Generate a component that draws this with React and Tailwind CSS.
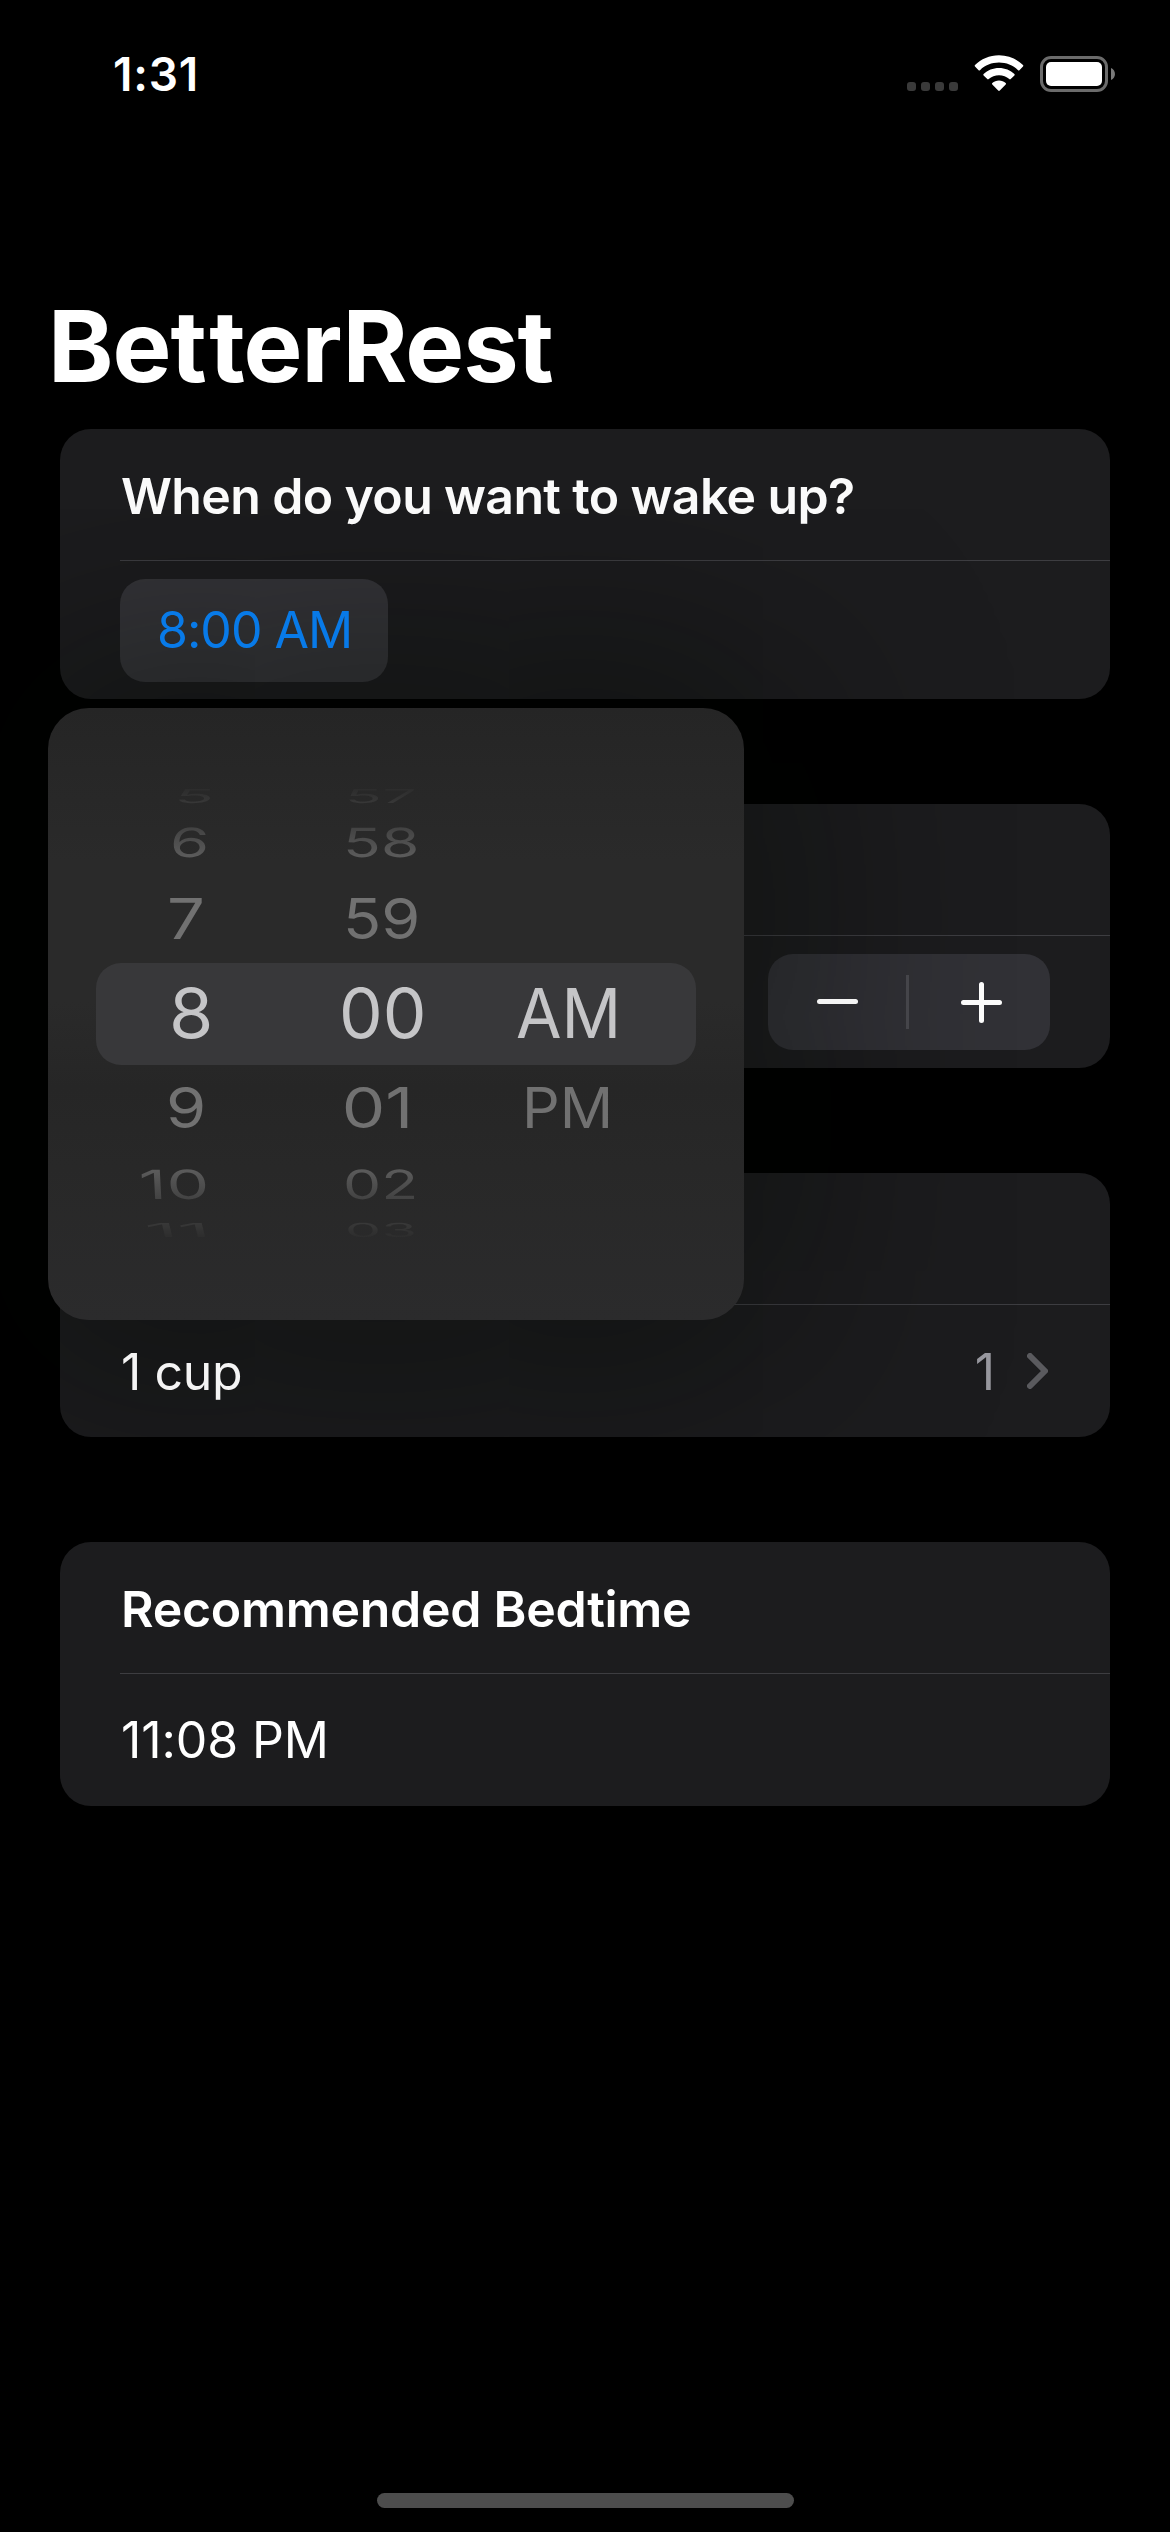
import React from "react";

function StatusBar() {
  return (
    <header className="flex h-[141px] items-start justify-between pt-[46px] pr-[55px] pl-[113px]">
      <span className="text-[46px] leading-[56px] font-semibold tracking-[0.8px]">1:31</span>
      <div className="flex items-start pt-[9px]">
        <div className="mt-[27px] mr-[16px] flex gap-[5px]">
          {[0, 1, 2, 3].map((dot) => (
            <span key={dot} className="size-[9px] rounded-[3px] bg-[#3a3a3a]" />
          ))}
        </div>
        <svg className="mr-[16px] h-[37px] w-[50px]" viewBox="0 0 50 37" fill="#fff">
          <path d="M25 0.2 C34.5 0.2 43 4 49 10 Q49.7 10.8 49 11.5 L45.4 15.2 Q44.8 15.8 44 15.2 C38.9 10.3 32.3 7.6 25 7.6 C17.7 7.6 11.1 10.3 6 15.2 Q5.2 15.8 4.6 15.2 L1 11.5 Q0.3 10.8 1 10 C7 4 15.5 0.2 25 0.2 Z" />
          <path d="M25 13 C31 13 36.4 15.3 40.4 19 Q41.1 19.7 40.4 20.4 L36.7 24.1 Q36 24.7 35.3 24.1 C32.5 21.7 29 20.3 25 20.3 C21 20.3 17.5 21.7 14.7 24.1 Q14 24.7 13.3 24.1 L9.6 20.4 Q8.9 19.7 9.6 19 C13.6 15.3 19 13 25 13 Z" />
          <path d="M25 25.6 C27.6 25.6 29.9 26.5 31.7 28 Q32.4 28.7 31.7 29.4 L25.8 35.5 Q25 36.3 24.2 35.5 L18.3 29.4 Q17.6 28.7 18.3 28 C20.1 26.5 22.4 25.6 25 25.6 Z" />
        </svg>
        <div className="mt-[1px] h-[36px] w-[68px] rounded-[11px] border-[3px] border-[#6b6b6b] p-[3px]">
          <div className="h-full w-full rounded-[5px] bg-white" />
        </div>
        <svg className="mt-[13px] ml-[3px] h-[12px] w-[4px]" viewBox="0 0 4 12" fill="#7a7a7a">
          <path d="M0 0 C5.3 2 5.3 10 0 12 Z" />
        </svg>
      </div>
    </header>
  );
}

function Card({ title, tall, children }) {
  return (
    <section className="flex flex-col rounded-[31px] bg-[#1c1c1e]">
      <div className="flex h-[131px] items-center pt-[3px] pl-[60px]">{title}</div>
      <div className="ml-[60px] h-px bg-[#3d3d41]" />
      <div className={tall ? "flex h-[138px] items-center px-[60px]" : "flex h-[132px] items-center px-[60px]"}>
        {children}
      </div>
    </section>
  );
}

function Stepper() {
  return (
    <div className="ml-auto flex h-[96px] w-[282px] items-center rounded-[25px] bg-[#313136]">
      <div className="flex flex-1 justify-center">
        <span className="relative z-10 mb-px h-[5px] w-[41px] rounded-full bg-[#f4f4f4]" />
      </div>
      <div className="h-[54px] w-[3px] bg-[#4a4a4f]" />
      <div className="flex flex-1 justify-center pl-[3px]">
        <svg className="relative z-10 size-[41px]" viewBox="0 0 41 41" stroke="#fcfcfc" strokeWidth="5" strokeLinecap="round">
          <path d="M2.5 20.5H38.5M20.5 2.5V38.5" />
        </svg>
      </div>
    </div>
  );
}

/* Each cell: text, left offset in its column, horizontal scale and lean. */
const wheelRows = [
  {
    row: "h-[26px]",
    ink: "bg-linear-to-b from-[#2b2b2b] to-[#3a3a3a] bg-clip-text text-transparent",
    squash: 0.28,
    cells: [["5", 127.3, 0.94, -14], ["57", 57, 0.88, -5]],
  },
  {
    row: "h-[66px]",
    ink: "bg-linear-to-b from-[#3e3e3e] to-[#606060] bg-clip-text text-transparent",
    squash: 0.585,
    cells: [["6", 121.5, 0.92, -3], ["58", 55.3, 0.905, -1]],
  },
  {
    row: "h-[87px]",
    ink: "text-[#717171]",
    squash: 0.82,
    cells: [["7", 119, 0.97, 0], ["59", 54.5, 0.913, 0]],
  },
  {
    row: "h-[102px]",
    ink: "text-[#c5c5c7]",
    squash: 1,
    cells: [["8", 120.6, 1.04, 0], ["00", 50.5, 1.005, 0], ["AM", 36, 0.957, 0]],
  },
  {
    row: "h-[87px]",
    ink: "text-[#717171]",
    squash: 0.82,
    cells: [["9", 117.5, 0.94, 0], ["01", 53.8, 1, 0], ["PM", 41.5, 0.857, 0]],
  },
  {
    row: "h-[66px]",
    ink: "bg-linear-to-b from-[#606060] to-[#3e3e3e] bg-clip-text text-transparent",
    squash: 0.585,
    cells: [["10", 90.5, 0.98, 3], ["02", 55.3, 0.877, 1]],
  },
  {
    row: "h-[26px]",
    ink: "bg-linear-to-b from-[#3a3a3a] to-[#2b2b2b] bg-clip-text text-transparent",
    squash: 0.28,
    cells: [["11", 96.5, 1.17, 14], ["03", 57, 0.834, 3]],
  },
];

function TimePicker() {
  return (
    <>
      <div className="pointer-events-none absolute top-[279px] left-[-12px] h-[612px] w-[696px] rounded-[41px] shadow-[0_0_220px_50px_rgba(0,6,0,0.46)]" />
      <div className="absolute top-[279px] left-[-12px] z-20 h-[612px] w-[696px] rounded-[41px] bg-[linear-gradient(#252525,#2a2a2a_25%,#2a2a2a_48%,#262626_62%,#282828_75%,#2b2b2c)] pt-[75px]">
        <div className="absolute top-[255px] left-[48px] h-[102px] w-[600px] rounded-[25px] bg-[#38383a]" />
        <div className="relative">
          {wheelRows.map(({ row, ink, squash, cells }) => (
            <div key={cells[0][0]} className={`grid grid-cols-[240px_192px_264px] grid-rows-[100%] ${row}`}>
              {cells.map(([text, x, sx, lean]) => (
                <div key={text} className="flex min-h-0 items-center">
                  <span
                    className={`block w-max shrink-0 origin-left text-[69px] leading-none ${ink}`}
                    style={{ marginLeft: x, transform: `skewX(${lean}deg) scale(${sx}, ${squash})` }}
                  >
                    {text}
                  </span>
                </div>
              ))}
            </div>
          ))}
        </div>
      </div>
    </>
  );
}

export default function App() {
  return (
    <div className="flex h-[2532px] w-[1170px] flex-col overflow-hidden bg-black font-['Inter','Liberation_Sans',sans-serif] text-[50px] leading-[60px] text-white">
      <StatusBar />
      <h1 className="relative z-10 mt-[145px] ml-[48px] text-[99px] leading-[120px] font-bold tracking-[-1px]">
        Be<span className="tracking-[2.5px]">t</span>terRest
      </h1>
      <main className="relative mx-[60px] mt-[23px] flex flex-col gap-[105px]">
        <Card
          tall
          title={
            <h2 className="relative z-10 ml-[1px] font-semibold tracking-[-0.64px] text-[#fafafa]">
              When do you want to wake up?
            </h2>
          }
        >
          <button className="flex h-[103px] w-[268px] items-center rounded-[25px] bg-[#343438] pl-[37px] tracking-[-1px]">
            <span className="relative z-10 text-[#087ae8]">8:00 AM</span>
          </button>
        </Card>
        <Card>
          <Stepper />
        </Card>
        <Card>
          <span className="relative z-10 ml-[1px] pt-[1px] tracking-[-0.4px] text-[#f4f4f4]">1 cup</span>
          <span className="mr-[32px] ml-auto pt-[1px] text-[#98989f]">1</span>
          <svg className="mr-[2px] h-[36px] w-[21px]" viewBox="0 0 21 36" fill="none" stroke="#5a5a5e" strokeWidth="6" strokeLinecap="round" strokeLinejoin="round">
            <path d="M3 3L18 18L3 33" />
          </svg>
        </Card>
        <Card title={<h2 className="relative z-10 ml-[1px] font-semibold tracking-[-0.28px]">Recommended Bedtime</h2>}>
          <span className="relative z-10 ml-[1px] tracking-[-0.1px]">11:08 PM</span>
        </Card>
        <TimePicker />
      </main>
      <div className="mx-auto mt-auto mb-[24px] h-[15px] w-[417px] rounded-full bg-[#4d4d4d]" />
    </div>
  );
}
